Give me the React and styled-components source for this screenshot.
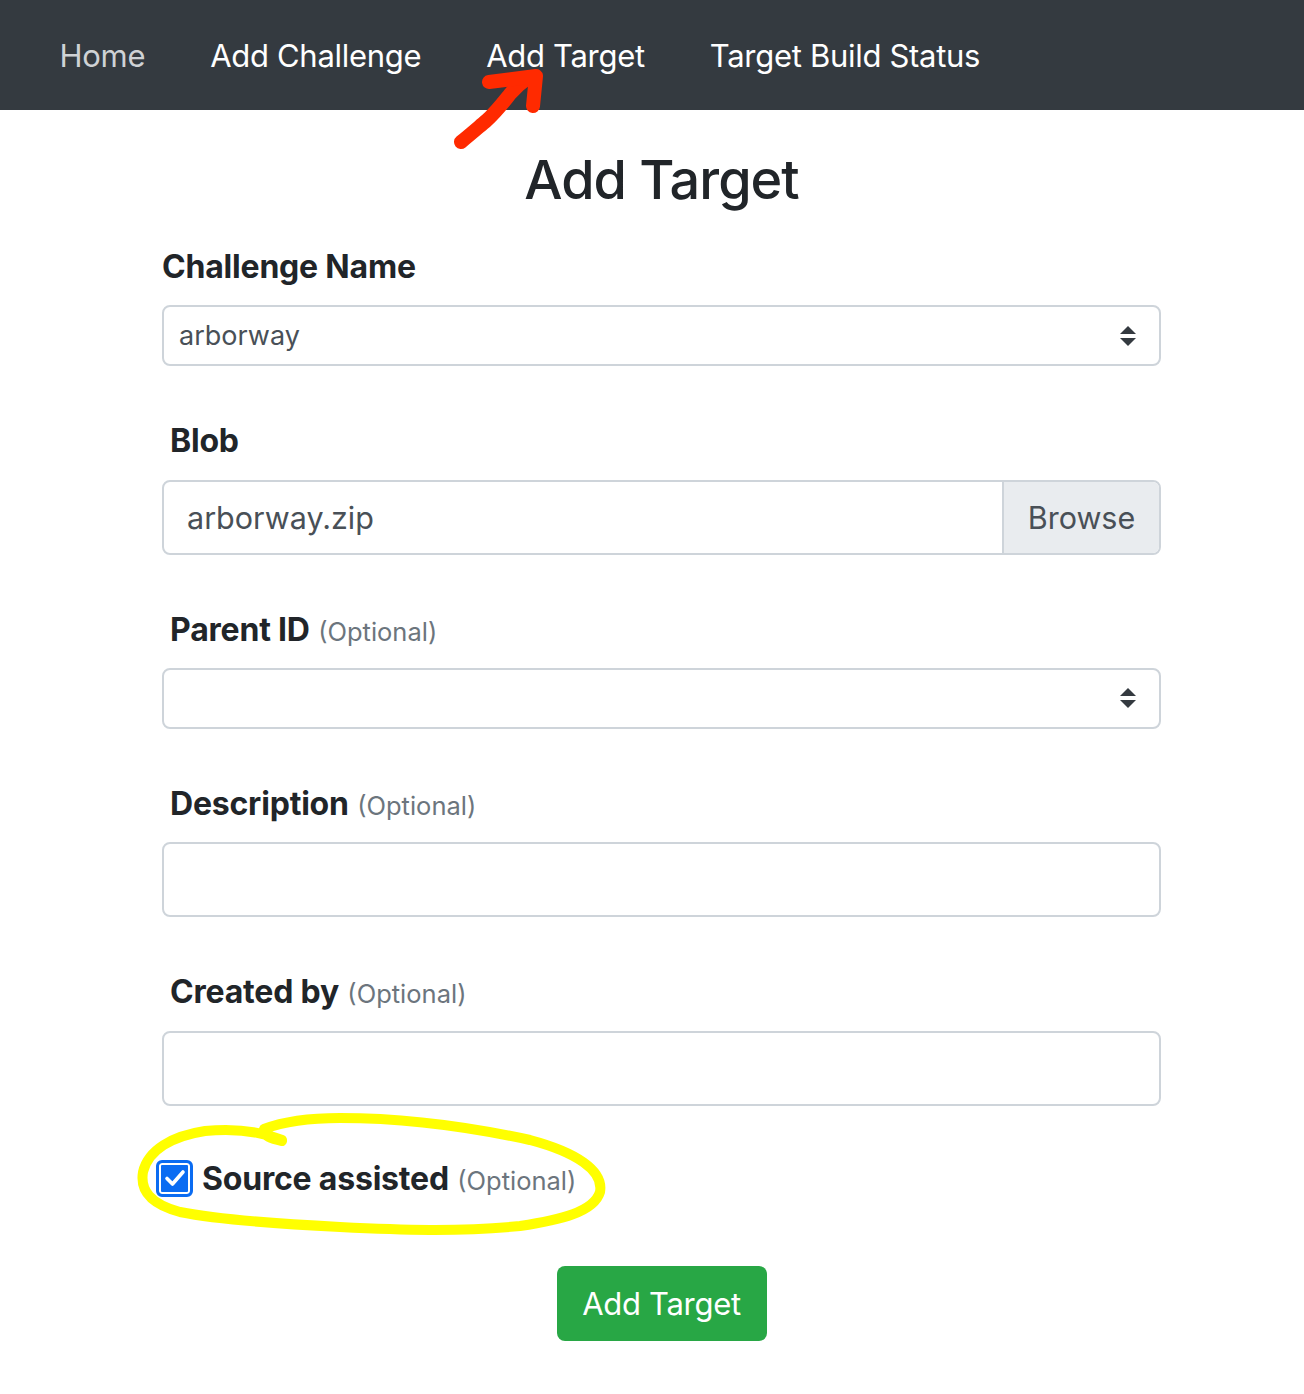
import React from "react";
import styled, { createGlobalStyle } from "styled-components";

const Global = createGlobalStyle`
  html, body { margin: 0; padding: 0; background: #fff; }
  body { font-family: Inter, "Noto Sans", "Liberation Sans", sans-serif; color: #212529; }
  * { box-sizing: border-box; }
`;

const Page = styled.div`
  position: relative;
  width: 1304px;
  min-height: 1394px;
`;

const Nav = styled.nav`
  height: 110px;
  background: #343a40;
  display: flex;
  align-items: center;
  padding-left: 27px;
`;

const NavLink = styled.a`
  font-size: 31px;
  letter-spacing: -0.3px;
  line-height: 1;
  padding: 0 32.5px;
  color: ${p => (p.$muted ? "#cfd2d5" : "#ffffff")};
  text-decoration: none;
`;

const Main = styled.main`
  padding: 0 143px 0 162px;
`;

const Title = styled.h1`
  margin: 0;
  padding-top: 38px;
  font-size: 54px;
  letter-spacing: -1px;
  font-weight: 500;
  line-height: 1.2;
  text-align: center;
  color: #212529;
`;

const Group = styled.div`
  margin-top: ${p => p.$mt || 0}px;
`;

const Label = styled.label`
  display: block;
  font-size: 32px;
  letter-spacing: -0.2px;
  font-weight: 700;
  line-height: 1.2;
  padding-left: ${p => (p.$indent ? 8 : 0)}px;
  margin-bottom: 19px;
  color: #212529;
`;

const Optional = styled.span`
  font-size: 25.5px;
  letter-spacing: 0;
  font-weight: 400;
  color: #6c757d;
  margin-left: 1px;
`;

const Select = styled.div`
  height: 61px;
  border: 2px solid #ced4da;
  border-radius: 8px;
  display: flex;
  align-items: center;
  justify-content: space-between;
  padding: 0 22px 0 15px;
  font-size: 27px;
  color: #495057;
`;

const Field = styled.div`
  height: 75px;
  border: 2px solid #ced4da;
  border-radius: 8px;
  display: flex;
  align-items: stretch;
  overflow: hidden;
`;

const FieldText = styled.div`
  flex: 1;
  display: flex;
  align-items: center;
  padding-left: 23px;
  font-size: 30.5px;
  color: #495057;
`;

const Addon = styled.div`
  width: 157px;
  background: #e9ecef;
  border-left: 2px solid #ced4da;
  display: flex;
  align-items: center;
  justify-content: center;
  font-size: 30.5px;
  color: #495057;
`;

const CheckRow = styled.div`
  margin-top: 53px;
  margin-left: -6px;
  display: flex;
  align-items: center;
  gap: 9px;
`;

const CheckBox = styled.span`
  width: 37px;
  height: 37px;
  flex: none;
  border-radius: 6px;
  background: #0b6cf2;
  border: 3.5px solid #0b6cf2;
  box-shadow: inset 0 0 0 2px #fff;
  display: flex;
  align-items: center;
  justify-content: center;
`;

const CheckLabel = styled.span`
  font-size: 32px;
  letter-spacing: -0.2px;
  font-weight: 700;
  color: #212529;
`;

const Actions = styled.div`
  display: flex;
  justify-content: center;
  margin-top: 68px;
`;

const Button = styled.button`
  width: 210px;
  height: 75px;
  border: none;
  border-radius: 8px;
  background: #28a745;
  color: #fff;
  font-family: inherit;
  font-size: 31px;
  letter-spacing: -0.3px;
  font-weight: 400;
`;

const Overlay = styled.svg`
  position: absolute;
  top: 0;
  left: 0;
  pointer-events: none;
`;

const SelectArrows = () => (
  <svg width="18" height="22" viewBox="0 0 18 22">
    <path d="M9 1 L17 9 L1 9 Z" fill="#343a40" />
    <path d="M1 13 L17 13 L9 21 Z" fill="#343a40" />
  </svg>
);

export default function App() {
  return (
    <Page>
      <Global />
      <Nav>
        <NavLink $muted>Home</NavLink>
        <NavLink>Add Challenge</NavLink>
        <NavLink>Add Target</NavLink>
        <NavLink>Target Build Status</NavLink>
      </Nav>
      <Main>
        <Title>Add Target</Title>

        <Group $mt={35}>
          <Label>Challenge Name</Label>
          <Select>
            <span>arborway</span>
            <SelectArrows />
          </Select>
        </Group>

        <Group $mt={56}>
          <Label $indent>Blob</Label>
          <Field>
            <FieldText>arborway.zip</FieldText>
            <Addon>Browse</Addon>
          </Field>
        </Group>

        <Group $mt={56}>
          <Label $indent>
            Parent ID <Optional>(Optional)</Optional>
          </Label>
          <Select>
            <span />
            <SelectArrows />
          </Select>
        </Group>

        <Group $mt={56}>
          <Label $indent>
            Description <Optional>(Optional)</Optional>
          </Label>
          <Field>
            <FieldText />
          </Field>
        </Group>

        <Group $mt={56}>
          <Label $indent>
            Created by <Optional>(Optional)</Optional>
          </Label>
          <Field>
            <FieldText />
          </Field>
        </Group>

        <CheckRow>
          <CheckBox>
            <svg width="22" height="22" viewBox="0 0 22 22">
              <path d="M3 11.5 L8.5 17 L19 5" fill="none" stroke="#fff" strokeWidth="3.6" strokeLinecap="round" strokeLinejoin="round" />
            </svg>
          </CheckBox>
          <CheckLabel>
            Source assisted <Optional>(Optional)</Optional>
          </CheckLabel>
        </CheckRow>

        <Actions>
          <Button>Add Target</Button>
        </Actions>
      </Main>

      <Overlay width="1304" height="1394" viewBox="0 0 1304 1394">
        <path
          d="M461 142 C472 133 480 126 486 121 C496 112 502 104 510 94 C516 87 522 82 528 78"
          fill="none" stroke="#ff2a00" strokeWidth="14" strokeLinecap="round"
        />
        <path
          d="M489 82 L536 76 L533 106"
          fill="none" stroke="#ff2a00" strokeWidth="14" strokeLinecap="round" strokeLinejoin="round"
        />
        <path
          d="M282 1141 C272 1139 262 1136 264 1129 C285 1121 310 1118 340 1118 C400 1118 470 1127 530 1140 C575 1152 604 1170 600 1192 C594 1212 560 1220 520 1226 C460 1232 400 1230 340 1227 C280 1224 220 1220 180 1212 C150 1204 140 1190 143 1172 C148 1150 172 1136 205 1131 C235 1128 262 1132 282 1140"
          fill="none" stroke="#ffff00" strokeWidth="10" strokeLinecap="round" strokeLinejoin="round"
        />
      </Overlay>
    </Page>
  );
}
